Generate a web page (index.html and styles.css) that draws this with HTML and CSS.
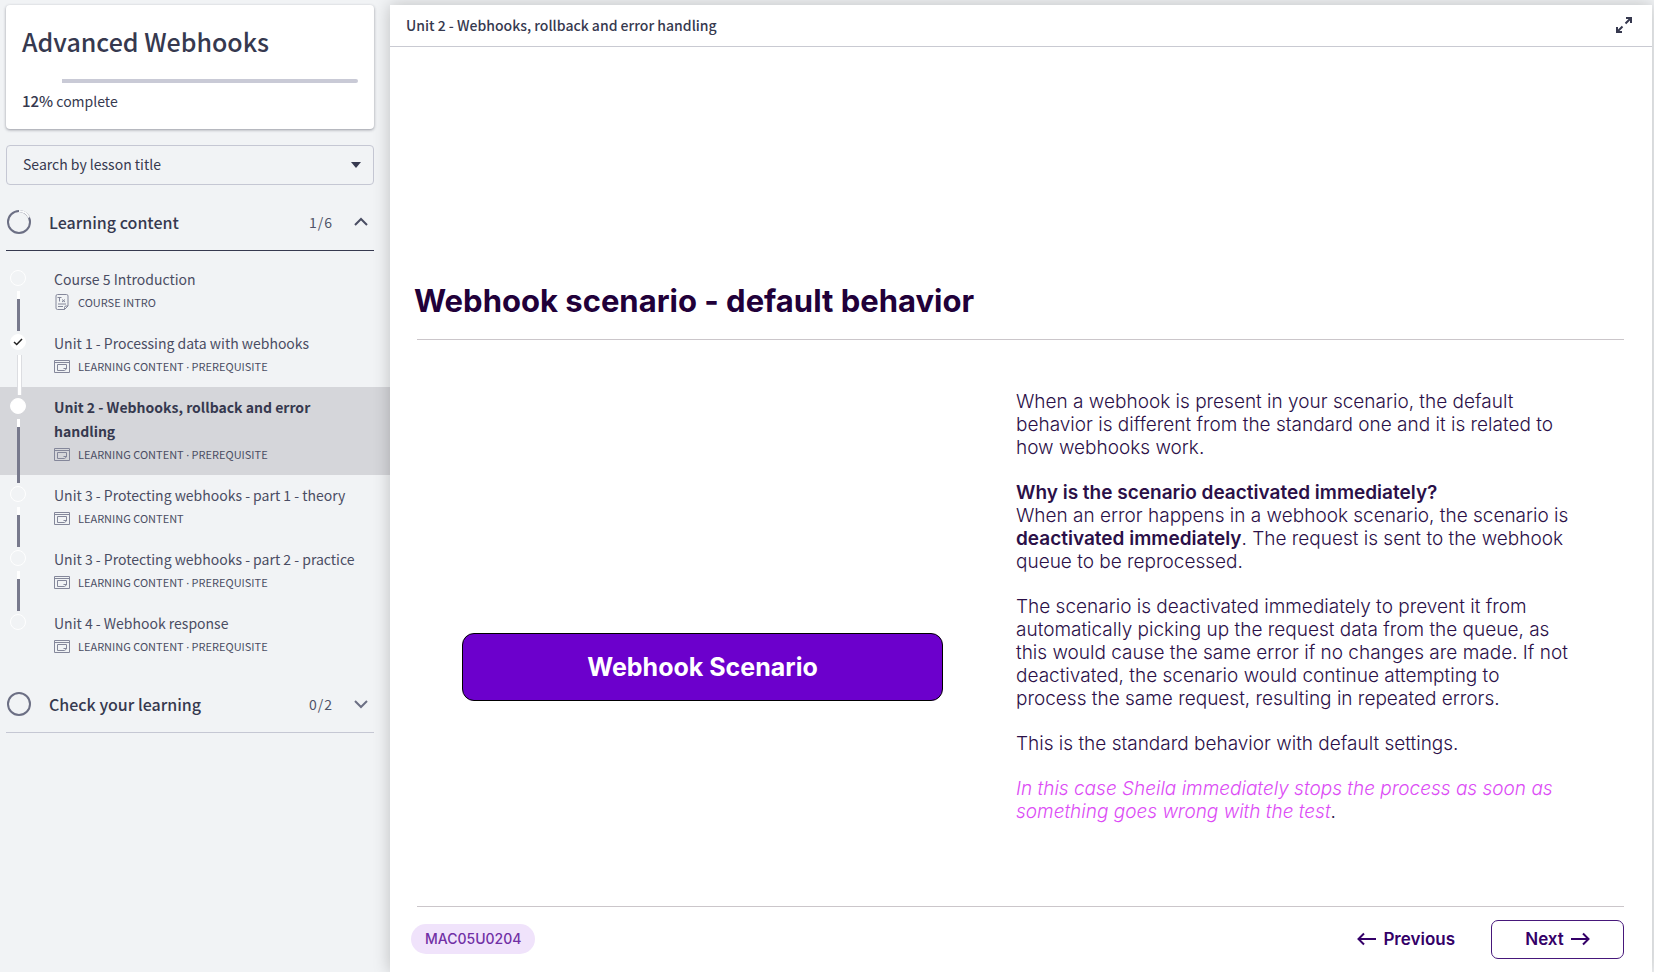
FILE: index.html
```
<!DOCTYPE html>
<html lang="en">
<head>
<meta charset="utf-8">
<title>Advanced Webhooks</title>
<link rel="stylesheet" href="styles.css">
</head>
<body>
<svg class="sprite" aria-hidden="true">
  <symbol id="lesson" viewBox="0 0 16 13"><path d="M.5.5h15v12H.5zM.5 2.500h15M3.500 4.500h9v4.500l-2 1.500h-7zM9.500 8.500h3" fill="none" stroke="currentColor"/></symbol>
</svg>
<div class="app">
  <aside class="sidebar">
    <section class="card">
      <h1 class="course">Advanced Webhooks</h1>
      <div class="progress"><div class="progress-done" style="width:12%"></div></div>
      <p class="complete"><b>12%</b> complete</p>
    </section>
    <div class="search">
      <select class="search-box" aria-label="Search by lesson title"><option>Search by lesson title</option></select>
      <svg class="caret" width="10" height="6" viewBox="0 0 10 6"><path d="M0 0h10L5 6z" fill="#36394f"/></svg>
    </div>
    <nav>
      <button class="group open" type="button">
        <svg width="26" height="26" viewBox="0 0 26 26" fill="none" stroke-width="2"><circle cx="13" cy="13" r="11" stroke="#6c6f84"/><path d="M13 2a11 11 0 0 1 10 6.500" stroke="#f8f9fa"/></svg>
        <span class="group-name">Learning content</span><span class="count">1/6</span>
        <svg width="14" height="14" viewBox="0 0 14 14"><path d="M1 10l6-6 6 6" fill="none" stroke="#4a4d63" stroke-width="2"/></svg>
      </button>
      <ul class="lessons">
        <li class="lesson"><i class="dot"></i><a class="name" href="#">Course 5 Introduction</a>
          <span class="meta"><svg width="16" height="16" viewBox="0 0 16 16" fill="none" stroke="currentColor"><path d="M10.500 15.500h-7q-1.500 0-1.500-1.500V2Q2 .5 3.500.5h9Q14 .5 14 2v10zM14 12h-2q-1.500 0-1.500 1.500v2M3.500 3.500h4M5.500 3.500v4M8 5.500l3 2.500M11 5.500L8 8M4 10h8M4 12.500h5"/></svg>COURSE INTRO</span></li>
        <li class="lesson done"><i class="dot"><svg width="10" height="8" viewBox="0 0 10 8"><path d="M1 4l2.700 2.500L9 1" fill="none" stroke="#222" stroke-width="1.500"/></svg></i><a class="name" href="#">Unit 1 - Processing data with webhooks</a>
          <span class="meta"><svg width="16" height="13"><use href="#lesson"/></svg><span>LEARNING CONTENT <span class="sep">·</span> PREREQUISITE</span></span></li>
        <li class="lesson current"><i class="dot"></i><a class="name" href="#">Unit 2 - Webhooks, rollback and error handling</a>
          <span class="meta"><svg width="16" height="13"><use href="#lesson"/></svg><span>LEARNING CONTENT <span class="sep">·</span> PREREQUISITE</span></span></li>
        <li class="lesson"><i class="dot"></i><a class="name" href="#">Unit 3 - Protecting webhooks - part 1 - theory</a>
          <span class="meta"><svg width="16" height="13"><use href="#lesson"/></svg>LEARNING CONTENT</span></li>
        <li class="lesson"><i class="dot"></i><a class="name" href="#">Unit 3 - Protecting webhooks - part 2 - practice</a>
          <span class="meta"><svg width="16" height="13"><use href="#lesson"/></svg><span>LEARNING CONTENT <span class="sep">·</span> PREREQUISITE</span></span></li>
        <li class="lesson"><i class="dot"></i><a class="name" href="#">Unit 4 - Webhook response</a>
          <span class="meta"><svg width="16" height="13"><use href="#lesson"/></svg><span>LEARNING CONTENT <span class="sep">·</span> PREREQUISITE</span></span></li>
      </ul>
      <button class="group" type="button">
        <svg width="26" height="26" viewBox="0 0 26 26"><circle cx="13" cy="13" r="11" fill="none" stroke="#6c6f84" stroke-width="2"/></svg>
        <span class="group-name">Check your learning</span><span class="count">0/2</span>
        <svg width="14" height="14" viewBox="0 0 14 14"><path d="M1 4l6 6 6-6" fill="none" stroke="#6c6f84" stroke-width="2"/></svg>
      </button>
    </nav>
  </aside>
  <main class="main">
    <header class="bar">
      <span>Unit 2 - Webhooks, rollback and error handling</span>
      <button class="expand" type="button" aria-label="Full screen"><svg width="16" height="16" viewBox="0 0 16 16" fill="none" stroke="#36394f" stroke-width="2"><path d="M9.500 6.500L15 1M10 1h5v5M6.500 9.500L1 15M1 10v5h5"/></svg></button>
    </header>
    <article class="slide">
      <h2 class="title">Webhook scenario - default behavior</h2>
      <div class="columns">
        <div class="left"><button class="scenario" type="button">Webhook Scenario</button></div>
        <div class="text">
          <p>When a webhook is present in your scenario, the default behavior is different from the standard one and it is related to how webhooks work.</p>
          <p><b>Why is the scenario deactivated immediately?</b><br>When an error happens in a webhook scenario, the scenario is <b>deactivated immediately</b>. The request is sent to the webhook queue to be reprocessed.</p>
          <p>The scenario is deactivated immediately to prevent it from automatically picking up the request data from the queue, as this would cause the same error if no changes are made. If not deactivated, the scenario would continue attempting to process the same request, resulting in repeated errors.</p>
          <p>This is the standard behavior with default settings.</p>
          <p><em>In this case Sheila immediately stops the process as soon as something goes wrong with the test</em>.</p>
        </div>
      </div>
      <footer class="footer">
        <span class="code">MAC05U0204</span>
        <button class="prev" type="button"><svg width="20" height="14" viewBox="0 0 20 14" fill="none" stroke="currentColor" stroke-width="2"><path d="M19 7H2M7 1.500L1.500 7 7 12.500"/></svg>Previous</button>
        <button class="next" type="button">Next<svg width="20" height="14" viewBox="0 0 20 14" fill="none" stroke="currentColor" stroke-width="2"><path d="M1 7h17M13 1.500L18.500 7 13 12.500"/></svg></button>
      </footer>
    </article>
  </main>
</div>
</body>
</html>
```
FILE: styles.css
```
* { box-sizing: border-box; }
body { margin: 0; background: #f1f3f5; color: #36394f; font: 14px/24px "Noto Sans CJK SC", "Noto Sans", sans-serif; }
button { border: 0; background: none; padding: 0; font: inherit; color: inherit; cursor: pointer; }
h1, h2, p, ul { margin: 0; padding: 0; }
svg { flex: none; }
.sprite { display: none; }
.app { display: flex; min-height: 100vh; overflow: hidden; }

.sidebar { width: 390px; flex: none; padding-top: 5px; }
.card { margin: 0 16px 16px 6px; height: 124px; padding: 16px 16px 0; background: #fff; border-radius: 4px; box-shadow: 0 1px 3px rgba(40, 42, 60, .45); }
.course { font-size: 25px; line-height: 40px; font-weight: 500; }
.progress { height: 4px; margin: 18px 0 6px; border-radius: 2px; background: #c9cad6; }
.progress-done { height: 4px; background: #fff; }
.complete b { font-size: 15px; font-weight: 500; }
.search { position: relative; margin: 0 16px 9px 6px; }
.search-box { display: block; width: 100%; height: 40px; appearance: none; border: 1px solid #c5c7d3; border-radius: 4px; background: transparent; padding: 0 16px 2px; color: inherit; font: inherit; }
.caret { position: absolute; right: 13px; top: 17px; }

.group { display: flex; align-items: center; width: 368px; height: 57px; margin-left: 6px; padding-right: 6px; border-bottom: 1px solid #c5c7d3; text-align: left; }
.group.open { border-color: #36394f; }
.group-name { flex: 1; margin-left: 17px; font-size: 16px; font-weight: 500; }
.count { margin-right: 21px; letter-spacing: 1px; color: #505368; }
.lessons { list-style: none; padding: 8px 0 9px; }
.lesson { position: relative; padding: 8px 24px 10px 54px; color: #4a4d63; }
.name { display: block; color: inherit; text-decoration: none; }
.meta { display: flex; align-items: center; gap: 8px; height: 22px; font-size: 11px; }
.meta svg { color: #84879a; }
.sep { font-family: "Noto Sans", sans-serif; }
.dot { position: absolute; left: 10px; top: 11px; width: 16px; height: 16px; border: 1px solid #fff; border-radius: 50%; display: flex; align-items: center; justify-content: center; }
.lesson::after { content: ""; position: absolute; left: 17px; top: 32px; bottom: -8px; width: 3px; background: linear-gradient(#fff 8px, #77798c 8px); z-index: 1; }
.lesson:last-child::after { display: none; }
.done .dot, .current .dot { background: #fff; }
.done::after { background: #fff; border: solid #dcdde1; border-width: 0 1px; }
.current { background: #d5d6da; }
.current .name { font-weight: 700; color: #36394f; }

.main { flex: 1; display: flex; flex-direction: column; margin: 5px 2px 0 0; background: #fff; box-shadow: 0 0 16px rgba(0, 0, 0, .22); position: relative; z-index: 2; }
.bar { display: flex; align-items: center; justify-content: space-between; height: 42px; padding: 0 20px 2px 16px; border-bottom: 1px solid #c9cad2; font-weight: 500; }
.expand { display: flex; }
.slide { flex: 1; display: flex; flex-direction: column; padding: 232px 28px 0 27px; font-family: Inter, sans-serif; color: #2b1048; }
.title { margin-left: -3px; padding-bottom: 16px; font-size: 31px; line-height: 44px; font-weight: 700; color: #210039; }
.columns { flex: 1; display: grid; grid-template-columns: 599fr 608fr; border: solid #cbc6ca; border-width: 1px 0; }
.left { display: flex; align-items: center; padding: 88px 73px 0 45px; }
.scenario { width: 100%; height: 68px; border: 1px solid #000; border-radius: 12px; background: #6c00cc; color: #fff; font-size: 25px; font-weight: 700; }
.text { padding: 50px 50px 0 0; font-size: 19px; line-height: 23px; font-weight: 300; }
.text p { margin-bottom: 22px; }
.text b { font-weight: 600; }
.text em { color: #dc4cf5; }
.footer { display: flex; align-items: center; height: 65px; margin-left: -6px; padding-bottom: 1px; color: #340068; font-size: 17px; font-weight: 600; }
.code { padding: 0 14px; line-height: 30px; border-radius: 15px; background: #f0e3fb; color: #7130a5; font-size: 14px; font-weight: 500; }
.prev, .next { display: flex; align-items: center; justify-content: center; gap: 6px; }
.prev { margin-left: auto; margin-right: 36px; }
.next { width: 133px; height: 39px; border: 1px solid #46177a; border-radius: 7px; }
```
